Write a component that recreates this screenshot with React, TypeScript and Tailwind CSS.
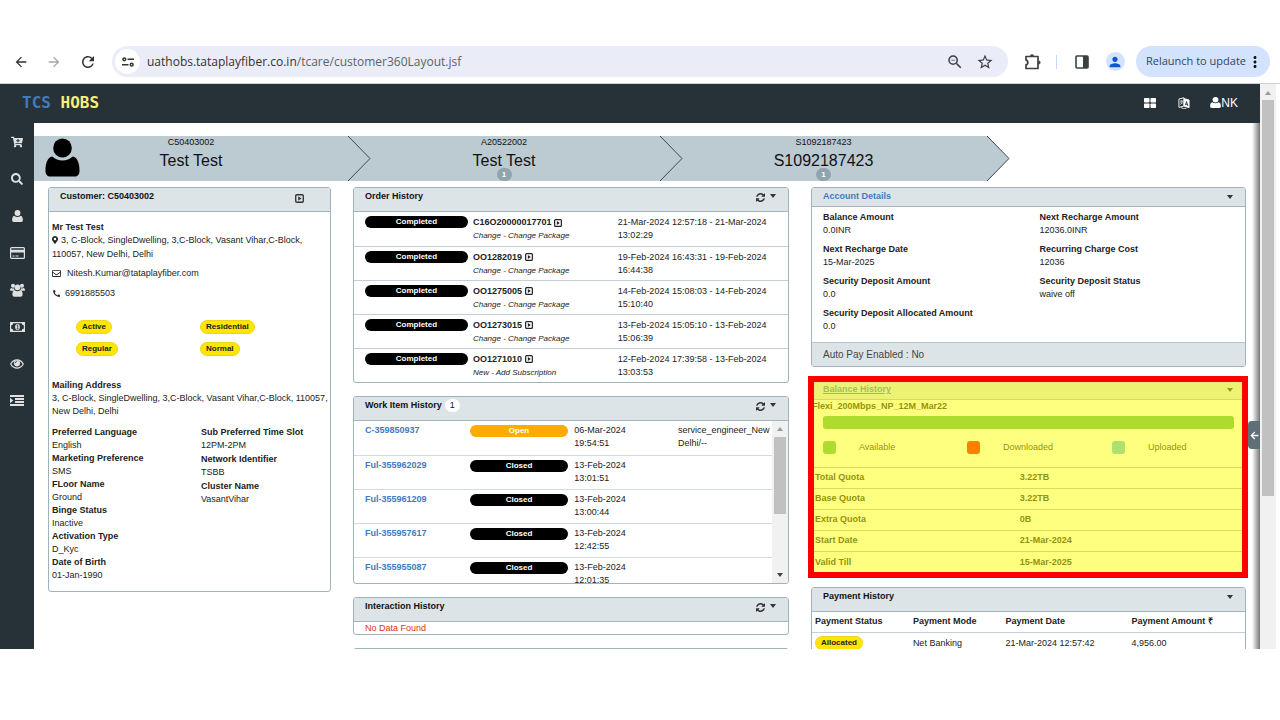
import type { ReactNode } from "react";
import {
  FaArrowLeft,
  FaCartPlus,
  FaMapMarkerAlt,
  FaRegEnvelope,
  FaSearch,
} from "react-icons/fa";
import {
  MdArrowBack,
  MdArrowForward,
  MdCall,
  MdMoreVert,
  MdPerson,
  MdRefresh,
  MdStarBorder,
  MdZoomOut,
} from "react-icons/md";

function UserIcon({ className }: { className: string }) {
  return (
    <svg viewBox="0 0 36 39" className={className} fill="currentColor" preserveAspectRatio="none" aria-hidden="true">
      <circle cx="18" cy="10" r="9.600" />
      <path d="M7.500 18.500C10.500 21.300 14 22.500 18 22.500S25.500 21.300 28.500 18.500C33.500 19.500 35.500 25 35.500 33c0 3.500-2 5.600-5 5.600h-25c-3 0-5-2.100-5-5.600 0-8 2-13.500 7-14.500Z" />
    </svg>
  );
}

function CaretSquare({ className }: { className: string }) {
  return (
    <svg viewBox="0 0 10 10" className={className} aria-hidden="true">
      <rect x="0.8" y="0.8" width="8.4" height="8.4" rx="1.2" fill="none" stroke="currentColor" strokeWidth="1.5" />
      <path d="M3.6 2.6 7.200 5 3.6 7.4Z" fill="currentColor" />
    </svg>
  );
}

function CardIcon() {
  return (
    <svg viewBox="0 0 15 12" className="h-3 w-[15px]" aria-hidden="true">
      <rect x="0.6" y="0.6" width="13.8" height="10.8" rx="1" fill="none" stroke="currentColor" strokeWidth="1.2" />
      <path d="M1 2.800h13v2.700H1zM2.500 8.600h2v1h-2zM5.500 8.600h3v1h-3z" fill="currentColor" />
    </svg>
  );
}

function GroupIcon() {
  return (
    <svg viewBox="0 0 15 14" className="h-3.5 w-[15px]" fill="currentColor" aria-hidden="true">
      <circle cx="3" cy="2.800" r="2" />
      <circle cx="12" cy="2.800" r="2" />
      <circle cx="7.500" cy="4.300" r="2.900" />
      <path d="M0 7.500C0 5.800.7 5 1.700 5c.8.5 1.600.6 2.400.4C4.200 6.600 4.600 7.300 5 7.800H.9C.4 7.800 0 7.700 0 7.500ZM15 7.500c0-1.700-.7-2.500-1.700-2.500-.8.5-1.600.6-2.400.4-.1 1.200-.5 1.900-.9 2.400h4.100c.5 0 .9-.1.900-.3Z" />
      <path d="M4.700 7.200c1.600 1.400 4 1.400 5.600 0C12 7.400 12.600 9 12.600 11.500c0 1.300-.8 2.200-1.900 2.200H4.300c-1.100 0-1.900-.9-1.900-2.200 0-2.500.6-4.100 2.300-4.300Z" />
    </svg>
  );
}

function MoneyIcon() {
  return (
    <svg viewBox="0 0 15 10" className="h-2.5 w-[15px]" aria-hidden="true">
      <path
        fill="currentColor"
        fillRule="evenodd"
        d="M0 0h15v10H0ZM3.300 1.200A2 2 0 0 1 1.200 3.200v3.600a2 2 0 0 1 2.100 2h8.400a2 2 0 0 1 2.100-2V3.200a2 2 0 0 1-2.100-2Z"
      />
      <ellipse cx="7.500" cy="5" rx="2.400" ry="3.100" fill="currentColor" />
      <path d="M6.700 3.700 7.700 3v3.800M6.500 6.900h2.200" fill="none" stroke="#263238" strokeWidth="0.800" />
    </svg>
  );
}

function EyeIcon() {
  return (
    <svg viewBox="0 0 14 10" className="h-2.5 w-3.5" aria-hidden="true">
      <path d="M.7 5C2.200 2.300 4.400.9 7 .9S11.800 2.300 13.300 5C11.800 7.700 9.600 9.100 7 9.100S2.200 7.700.7 5Z" fill="none" stroke="currentColor" strokeWidth="1.200" />
      <circle cx="7" cy="4.300" r="3.100" fill="currentColor" />
      <path d="M5.200 4.300A1.800 1.800 0 0 1 7 2.500" fill="none" stroke="#263238" strokeWidth="0.700" />
    </svg>
  );
}

function IndentIcon() {
  return (
    <svg viewBox="0 0 14 11" className="h-[11px] w-3.5" fill="currentColor" aria-hidden="true">
      <path d="M0 0h14v2H0zM5 3h9v2H5zM5 6h9v2H5zM0 9h14v2H0zM0 2.700 3.300 5.500 0 8.300Z" />
    </svg>
  );
}

function AppsIcon() {
  return (
    <svg viewBox="0 0 12 10" className="h-2.5 w-3" fill="currentColor" aria-hidden="true">
      <rect width="5.500" height="4.500" rx="0.700" />
      <rect x="6.500" width="5.500" height="4.500" rx="0.700" />
      <rect y="5.500" width="5.500" height="4.500" rx="0.700" />
      <rect x="6.500" y="5.500" width="5.500" height="4.500" rx="0.700" />
    </svg>
  );
}

function ExtensionIcon() {
  return (
    <svg viewBox="0 0 18 18" className="size-[18px]" fill="none" stroke="currentColor" aria-hidden="true">
      <path d="M2 3.500h12v12H2v-3.600c2.400-.3 2.400-4.500 0-4.800Z" strokeWidth="1.700" strokeLinejoin="round" />
      <path d="M6.200 3.200a1.800 1.800 0 0 1 3.600 0ZM14.500 7.700a1.800 1.800 0 0 1 0 3.600Z" fill="currentColor" strokeWidth="0.500" />
    </svg>
  );
}

function SyncIcon() {
  return (
    <svg viewBox="0 0 1536 1536" className="size-[9px]" fill="currentColor" aria-hidden="true">
      <path d="M1511 928q0 5-1 7-64 268-268 434.500t-478 166.500q-146 0-282.500-55t-243.500-157l-129 129q-19 19-45 19t-45-19-19-45v-448q0-26 19-45t45-19h448q26 0 45 19t19 45-19 45l-137 137q71 66 161 102t187 36q134 0 250-65t186-179q11-17 53-117 8-23 30-23h192q13 0 22.500 9.500t9.500 22.500zm25-800v448q0 26-19 45t-45 19h-448q-26 0-45-19t-19-45 19-45l138-138q-148-137-349-137-134 0-250 65t-186 179q-11 17-53 117-8 23-30 23h-199q-13 0-22.500-9.500t-9.500-22.500v-7q65-268 270-434.500t480-166.500q146 0 284 55.500t245 156.500l130-129q19-19 45-19t45 19 19 45z" />
    </svg>
  );
}

function TranslateIcon() {
  return (
    <svg viewBox="0 0 13 13" className="size-3" fill="none" stroke="currentColor" aria-hidden="true">
      <path d="M1 2.2 6.500 0.800V9.800L1 11.200Z" />
      <path d="M6.500 1.800 12 3.200V11.600L6.500 9.800Z" fill="currentColor" />
      <path d="M2.300 4.500h3M3.800 3.500v1M2.500 8c1.300-.7 2-1.800 2.300-3.300M2.800 5.800l2 2" strokeWidth="0.800" />
      <path d="M8 8.800 9.300 5l1.300 4.600M8.400 7.700l1.900.4" stroke="#263238" strokeWidth="0.900" />
      <path d="M3 11.200c1.500 1.200 4 1.500 6 1" strokeWidth="0.900" />
    </svg>
  );
}

function Caret({ up = false, className = "" }: { up?: boolean; className?: string }) {
  return (
    <svg viewBox="0 0 6 4" className={`h-1 w-1.5 ${className}`} fill="currentColor" aria-hidden="true">
      <path d={up ? "M0 4 3 0l3 4Z" : "M0 0h6L3 4Z"} />
    </svg>
  );
}

function BrowserBar() {
  return (
    <div className="flex h-11 shrink-0 items-center border-b border-[#c9d2d6] pr-[10px] pl-3 text-[#3c4043]">
      <button aria-label="Back" className="flex w-[18px] justify-center text-[#333]">
        <MdArrowBack className="size-4" />
      </button>
      <button aria-label="Forward" className="ml-[15px] flex w-[18px] justify-center text-[#a5a5a5]">
        <MdArrowForward className="size-4" />
      </button>
      <button aria-label="Reload" className="ml-4 flex w-[18px] justify-center text-[#333]">
        <MdRefresh className="size-[18px]" />
      </button>
      <div className="ml-[15px] flex h-[31px] min-w-0 flex-1 items-center rounded-full bg-[#eaecf7] pr-[14px] pl-[3px]">
        <button aria-label="Site information" className="flex size-[25px] shrink-0 items-center justify-center rounded-full bg-white">
          <svg viewBox="0 0 12 10" className="h-[10px] w-3" fill="none" stroke="#333" strokeWidth="1.500">
            <circle cx="2.300" cy="2.300" r="1.400" />
            <path d="M5.500 2.300H12M0 7.700h6.500" />
            <circle cx="9.700" cy="7.700" r="1.400" />
          </svg>
        </button>
        <a href="#" className="ml-[7px] min-w-0 flex-1 truncate font-['Open_Sans','Noto_Sans',sans-serif] text-xs text-[#5f6368]">
          <span className="text-[#333]">uathobs.tataplayfiber.co.in</span>/tcare/customer360Layout.jsf
        </a>
        <button aria-label="Zoom">
          <MdZoomOut className="size-[18px]" />
        </button>
        <button aria-label="Bookmark" className="ml-3">
          <MdStarBorder className="size-[18px]" />
        </button>
      </div>
      <button aria-label="Extensions" className="ml-4">
        <ExtensionIcon />
      </button>
      <span className="ml-[14px] h-3.5 w-px bg-[#c5dafb]" />
      <button aria-label="Side panel" className="ml-[18px]">
        <svg viewBox="0 0 14 14" className="size-3.5">
          <rect x="1" y="1" width="12" height="12" rx="1" fill="none" stroke="currentColor" strokeWidth="1.600" />
          <path d="M8 1h5v12H8z" fill="currentColor" />
        </svg>
      </button>
      <button aria-label="Profile" className="ml-[17px] flex size-[19px] items-center justify-center rounded-full bg-[#d3e3fd] text-[#0b57d0]">
        <MdPerson className="size-4" />
      </button>
      <button className="ml-[11px] flex h-[31px] items-center rounded-full bg-[#d3e3fd] pr-1.5 pl-[10px] font-['Open_Sans','Noto_Sans',sans-serif] text-[11px] whitespace-nowrap text-[#33435c]">
        Relaunch to update
        <MdMoreVert className="size-[18px] text-[#111]" />
      </button>
    </div>
  );
}

const navItems: { label: string; icon: ReactNode }[] = [
  { label: "Cart", icon: <FaCartPlus className="size-3" /> },
  { label: "Search", icon: <FaSearch className="size-3" /> },
  { label: "Customer", icon: <UserIcon className="h-3 w-[11px]" /> },
  { label: "Cards", icon: <CardIcon /> },
  { label: "Groups", icon: <GroupIcon /> },
  { label: "Payments", icon: <MoneyIcon /> },
  { label: "View", icon: <EyeIcon /> },
  { label: "Menu", icon: <IndentIcon /> },
];

const steps = [
  { id: "C50403002", name: "Test Test", count: null },
  { id: "A20522002", name: "Test Test", count: 1 },
  { id: "S1092187423", name: "S1092187423", count: 1 },
];

function StepBand() {
  return (
    <div className="mt-[13px] grid h-[45px] grid-cols-[314fr_312fr_327fr_273fr]">
      {steps.map((step, i) => (
        <div key={step.id} className="relative flex bg-[#bccad1] text-[#111]">
          {i === 0 && (
            <div className="w-[46px] shrink-0 pt-[2px] pl-[11px] text-black">
              <UserIcon className="h-[39px] w-[35px]" />
            </div>
          )}
          <div className="flex flex-1 flex-col items-center">
            <span className="text-[9px] leading-[13px]">{step.id}</span>
            <span className="text-base leading-[23px]">{step.name}</span>
            {step.count && (
              <span className="-mt-1 flex h-[13px] w-[15px] shrink-0 items-center justify-center rounded-full bg-[#90a4ae] text-[8px] font-bold text-white">
                {step.count}
              </span>
            )}
          </div>
          {i === 0 && <div className="w-[46px] shrink-0" />}
          <svg viewBox="0 0 23 45" className="absolute top-0 left-full z-10 h-[45px] w-[23px]" aria-hidden="true">
            <path d="M0 0 22 22.500 0 45Z" fill="#bccad1" />
            <path d="M0 0 22 22.500 0 45" fill="none" stroke="#3f4a4f" strokeWidth="1" />
          </svg>
        </div>
      ))}
    </div>
  );
}

function Panel({
  title,
  link = false,
  tools,
  tall = true,
  underline = false,
  children,
}: {
  title: ReactNode;
  link?: boolean;
  tools: ReactNode;
  tall?: boolean;
  underline?: boolean;
  children?: ReactNode;
}) {
  return (
    <section className="overflow-hidden rounded-[3px] border border-[#9fb3bb] bg-white">
      <div
        className={`flex items-start justify-between border-b border-[#a3b6be] bg-[#dde4e7] pl-[11px] ${tall ? "h-6" : "h-[19px]"}`}
      >
        <h2
          className={`flex items-center pt-0.5 text-[9px] leading-[13px] font-bold ${link ? "text-[#427bbd]" : "text-[#111]"} ${underline ? "underline" : ""}`}
        >
          {title}
        </h2>
        <div className="flex items-center text-[#333]">{tools}</div>
      </div>
      {children}
    </section>
  );
}

const refreshTools = (
  <>
    <button aria-label="Refresh" className="mt-[5px]">
      <SyncIcon />
    </button>
    <button aria-label="Collapse" className="mt-[2px] mr-3 ml-[5px]">
      <Caret />
    </button>
  </>
);

const collapseTool = (
  <button aria-label="Collapse" className="mt-[7px] mr-3 block">
    <Caret />
  </button>
);

function Tag({ children }: { children: ReactNode }) {
  return (
    <span className="inline-block rounded-full border border-[#efd51a] bg-[#ffe600] px-[5px] text-[8px] leading-3 font-bold text-[#222]">
      {children}
    </span>
  );
}

function Pill({ children, open = false }: { children: ReactNode; open?: boolean }) {
  return (
    <span
      className={`block h-3 rounded-full text-center text-[8px] leading-[11px] font-bold text-white ${open ? "bg-[#ffab00]" : "bg-black"}`}
    >
      {children}
    </span>
  );
}

function Field({ label, value }: { label: string; value: string }) {
  return (
    <div>
      <dt className="font-bold">{label}</dt>
      <dd>{value}</dd>
    </div>
  );
}

const customerLeft = [
  ["Preferred Language", "English"],
  ["Marketing Preference", "SMS"],
  ["FLoor Name", "Ground"],
  ["Binge Status", "Inactive"],
  ["Activation Type", "D_Kyc"],
  ["Date of Birth", "01-Jan-1990"],
];

const customerRight = [
  ["Sub Preferred Time Slot", "12PM-2PM"],
  ["Network Identifier", "TSBB"],
  ["Cluster Name", "VasantVihar"],
];

function CustomerCard() {
  return (
    <Panel
      title="Customer: C50403002"
      tools={
        <button aria-label="Open customer" className="mt-[6px] mr-[26px]">
          <CaretSquare className="size-[9px]" />
        </button>
      }
    >
      <div className="pt-[9px] pb-[9px] pl-[3px] leading-[13px]">
        <p className="leading-3 font-bold">Mr Test Test</p>
        <p className="pr-[3px] leading-[14px]">
          <FaMapMarkerAlt className="mr-[3px] inline h-2 w-[6px] align-[-1px]" />
          3, C-Block, SingleDwelling, 3,C-Block, Vasant Vihar,C-Block, 110057, New Delhi, Delhi
        </p>
        <p className="mt-[6px] flex items-center gap-[6px]">
          <FaRegEnvelope className="size-[9px]" />
          Nitesh.Kumar@tataplayfiber.com
        </p>
        <p className="mt-[7px] flex items-center gap-1">
          <MdCall className="size-[9px]" />
          6991885503
        </p>
        <div className="mt-5 grid grid-cols-[124fr_130fr] gap-y-2 pl-6">
          {["Active", "Residential", "Regular", "Normal"].map((tag) => (
            <div key={tag} className="flex">
              <Tag>{tag}</Tag>
            </div>
          ))}
        </div>
        <p className="mt-[23px] font-bold">Mailing Address</p>
        <p>3, C-Block, SingleDwelling, 3,C-Block, Vasant Vihar,C-Block, 110057, New Delhi, Delhi</p>
        <div className="mt-2 grid grid-cols-[150fr_130fr] items-start">
          <dl>
            {customerLeft.map(([label, value]) => (
              <Field key={label} label={label} value={value} />
            ))}
          </dl>
          <dl className="flex flex-col gap-px">
            {customerRight.map(([label, value]) => (
              <Field key={label} label={label} value={value} />
            ))}
          </dl>
        </div>
      </div>
    </Panel>
  );
}

const orders = [
  ["C16O20000017701", "Change - Change Package", "21-Mar-2024 12:57:18 - 21-Mar-2024 13:02:29"],
  ["OO1282019", "Change - Change Package", "19-Feb-2024 16:43:31 - 19-Feb-2024 16:44:38"],
  ["OO1275005", "Change - Change Package", "14-Feb-2024 15:08:03 - 14-Feb-2024 15:10:40"],
  ["OO1273015", "Change - Change Package", "13-Feb-2024 15:05:10 - 13-Feb-2024 15:06:39"],
  ["OO1271010", "New - Add Subscription", "12-Feb-2024 17:39:58 - 13-Feb-2024 13:03:53"],
];

function OrderHistory() {
  return (
    <Panel title="Order History" tools={refreshTools}>
      <table className="w-full table-fixed leading-[13px]">
        <colgroup>
          <col className="w-[27.400%]" />
          <col className="w-[33.400%]" />
          <col />
        </colgroup>
        <tbody>
          {orders.map(([id, kind, dates]) => (
            <tr key={id} className="h-[34px] border-b border-[#c3cfd4] align-top last:border-0">
              <td className="pt-1 pr-[5px] pl-[11px]">
                <Pill>Completed</Pill>
              </td>
              <td className="pt-1">
                <a href="#" className="flex items-center gap-[3px] font-bold">
                  {id}
                  <CaretSquare className="size-2" />
                </a>
                <p className="text-[8px] italic">{kind}</p>
              </td>
              <td className="pt-1 pr-[14px]">{dates}</td>
            </tr>
          ))}
        </tbody>
      </table>
    </Panel>
  );
}

const workItems = [
  ["C-359850937", "Open", "06-Mar-2024 19:54:51", "service_engineer_New Delhi/--"],
  ["Ful-355962029", "Closed", "13-Feb-2024 13:01:51", ""],
  ["Ful-355961209", "Closed", "13-Feb-2024 13:00:44", ""],
  ["Ful-355957617", "Closed", "13-Feb-2024 12:42:55", ""],
  ["Ful-355955087", "Closed", "13-Feb-2024 12:01:35", ""],
];

function WorkItemHistory() {
  return (
    <Panel
      title={
        <>
          Work Item History
          <span className="ml-[3px] rounded-full bg-white px-[5px] leading-[13px] font-normal">1</span>
        </>
      }
      tools={refreshTools}
    >
      <div className="flex h-[162px] overflow-hidden">
        <table className="min-w-0 flex-1 table-fixed self-start leading-[13px]">
          <colgroup>
            <col className="w-[27.700%]" />
            <col className="w-[25%]" />
            <col className="w-[24.800%]" />
            <col />
          </colgroup>
          <tbody>
            {workItems.map(([id, status, date, owner]) => (
              <tr key={id} className="h-[34px] border-b border-[#d3dadd] align-top">
                <td className="pt-[3px] pl-[11px]">
                  <a href="#" className="font-bold text-[#427bbd]">
                    {id}
                  </a>
                </td>
                <td className="pt-1 pr-[6px]">
                  <Pill open={status === "Open"}>{status}</Pill>
                </td>
                <td className="pt-[3px] pr-[40px]">{date}</td>
                <td className="pt-[3px]">{owner}</td>
              </tr>
            ))}
          </tbody>
        </table>
        <div className="flex w-4 shrink-0 flex-col items-center justify-between bg-[#f1f1f1] px-[2px] py-[6px]">
          <Caret up className="text-[#999]" />
          <div className="mt-[6px] mb-auto h-[77px] w-3 bg-[#c1c1c1]" />
          <Caret className="text-[#444]" />
        </div>
      </div>
    </Panel>
  );
}

const accountFields = [
  ["Balance Amount", "0.0INR"],
  ["Next Recharge Amount", "12036.0INR"],
  ["Next Recharge Date", "15-Mar-2025"],
  ["Recurring Charge Cost", "12036"],
  ["Security Deposit Amount", "0.0"],
  ["Security Deposit Status", "waive off"],
  ["Security Deposit Allocated Amount", "0.0"],
];

function AccountDetails() {
  return (
    <Panel title="Account Details" link tall={false} tools={collapseTool}>
      <dl className="grid grid-cols-2 gap-y-[6px] px-[11px] pt-1 pb-[9px] leading-[13px]">
        {accountFields.map(([label, value], i) => (
          <div key={label} className={i % 2 ? "pl-[11px]" : ""}>
            <Field label={label} value={value} />
          </div>
        ))}
      </dl>
      <p className="border-t border-[#b9c6cc] bg-[#dde4e7] px-[11px] text-[10px] leading-[23px] text-[#444]">
        Auto Pay Enabled : No
      </p>
    </Panel>
  );
}

const quotas = [
  ["Total Quota", "3.22TB"],
  ["Base Quota", "3.22TB"],
  ["Extra Quota", "0B"],
  ["Start Date", "21-Mar-2024"],
  ["Valid Till", "15-Mar-2025"],
];

const legend = [
  { label: "Available", swatch: "bg-[#5cb85c]" },
  { label: "Downloaded", swatch: "bg-[#ff0000]" },
  { label: "Uploaded", swatch: "bg-[#5bc0de]" },
];

function BalanceHistory() {
  return (
    <div className="relative">
      <Panel title="Balance History" link underline tall={false} tools={collapseTool}>
        <p className="leading-[13px] font-bold">Flexi_200Mbps_NP_12M_Mar22</p>
        <div className="mx-[11px] mt-[3px] h-[13px] rounded-[3px] bg-[#5cb85c]" />
        <ul className="mt-3 grid grid-cols-[144fr_145fr_133fr] pl-[11px] leading-[13px]">
          {legend.map((item) => (
            <li key={item.label} className="flex items-center gap-[23px]">
              <span className={`size-[13px] rounded-[3px] ${item.swatch}`} />
              {item.label}
            </li>
          ))}
        </ul>
        <table className="mt-[13px] w-full table-fixed">
          <tbody>
            {quotas.map(([label, value]) => (
              <tr key={label} className="h-[21px] border-t border-[#aab9bf]">
                <th scope="row" className="w-[48%] pl-[3px] text-left font-bold">
                  {label}
                </th>
                <td className="font-bold">{value}</td>
              </tr>
            ))}
          </tbody>
        </table>
      </Panel>
      <div className="pointer-events-none absolute -top-1 -right-[2px] -bottom-1 -left-[3px] border-[6px] border-[#ff0000] bg-[#ffff00]/50 bg-clip-padding" />
    </div>
  );
}

function PaymentHistory() {
  return (
    <Panel title="Payment History" tools={collapseTool}>
      <table className="w-full table-fixed text-left">
        <thead>
          <tr className="h-[21px] border-b border-[#c3cfd4]">
            <th className="w-[23.300%] pl-[3px]">Payment Status</th>
            <th className="w-[21.400%]">Payment Mode</th>
            <th className="w-[29.100%]">Payment Date</th>
            <th>Payment Amount ₹</th>
          </tr>
        </thead>
        <tbody>
          <tr className="h-[21px]">
            <td className="pl-[3px]">
              <Tag>Allocated</Tag>
            </td>
            <td>Net Banking</td>
            <td>21-Mar-2024 12:57:42</td>
            <td>4,956.00</td>
          </tr>
        </tbody>
      </table>
    </Panel>
  );
}

export default function App() {
  return (
    <div className="flex h-screen flex-col overflow-hidden bg-white pt-10 pb-[71px] font-['Liberation_Sans',Arial,sans-serif] text-[9px] text-[#222]">
      <BrowserBar />
      <div className="flex min-h-0 flex-1 pr-1">
        <div className="flex min-w-0 flex-1 flex-col">
          <header className="flex h-[39px] shrink-0 items-center bg-[#263238] px-[22px] pb-0.5 text-white">
            <h1 className="font-['DejaVu_Sans_Mono',monospace] text-base leading-5 font-bold text-[#f7ee7c]">
              <span className="text-[#427bbd]">TCS</span> HOBS
            </h1>
            <button aria-label="Apps" className="ml-auto">
              <AppsIcon />
            </button>
            <button aria-label="Language" className="ml-[22px]">
              <TranslateIcon />
            </button>
            <button className="ml-5 flex items-center text-xs">
              <UserIcon className="h-[11px] w-[11px]" />
              NK
            </button>
          </header>
          <div className="flex min-h-0 flex-1">
            <nav className="w-[34px] shrink-0 bg-[#263238] text-[#e0e0e0]">
              <ul>
                {navItems.map((item) => (
                  <li key={item.label} className="h-[37px]">
                    <button aria-label={item.label} className="flex size-full items-center justify-center">
                      {item.icon}
                    </button>
                  </li>
                ))}
              </ul>
            </nav>
            <main className="relative min-w-0 flex-1 overflow-hidden">
              <StepBand />
              <div className="mt-[6px] grid grid-cols-[283fr_436fr_435fr] items-start gap-x-[22px] px-[14px]">
                <CustomerCard />
                <div className="flex flex-col gap-[13px]">
                  <OrderHistory />
                  <WorkItemHistory />
                  <Panel title="Interaction History" tools={refreshTools}>
                    <p className="px-[11px] leading-3 text-[#dd3311]">No Data Found</p>
                  </Panel>
                  <Panel title="" tools={refreshTools} />
                </div>
                <div className="flex flex-col gap-[13px]">
                  <AccountDetails />
                  <BalanceHistory />
                  <PaymentHistory />
                </div>
              </div>
              <div className="absolute inset-y-0 right-0 w-2 bg-linear-to-r from-transparent to-[#777]" />
              <button
                aria-label="Open side panel"
                className="absolute top-[298px] right-0 flex h-7 w-3 items-center justify-center rounded-l-[4px] bg-[#5f6f76] text-white"
              >
                <FaArrowLeft className="size-[9px]" />
              </button>
            </main>
          </div>
        </div>
        <div className="flex w-4 shrink-0 flex-col items-center bg-[#f1f1f1] pt-[7px]">
          <Caret up className="text-[#999]" />
          <div className="mt-[5px] h-[71%] w-3 bg-[#c1c1c1]" />
        </div>
      </div>
    </div>
  );
}
